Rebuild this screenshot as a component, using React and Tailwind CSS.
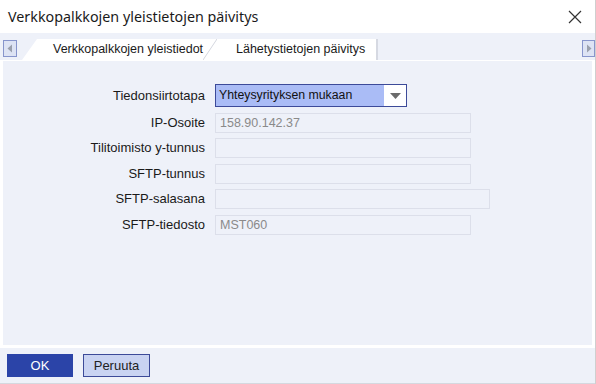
import React from "react";

const font = { fontFamily: '"Liberation Sans", Arial, sans-serif' };

function Field({ label, value, wide }) {
  return (
    <>
      <div className="text-right text-[13px] text-[#1a1a1a] leading-[20px] h-[20px]">{label}</div>
      <div
        className={`h-[20px] border border-[#dcdfea] bg-[#eef1f9] text-[12.5px] text-[#8a8a8a] leading-[18px] pl-[4px] ${
          wide ? "w-[275px]" : "w-[256px]"
        }`}
      >
        {value}
      </div>
    </>
  );
}

export default function App() {
  return (
    <div className="w-[596px] h-[384px] bg-white flex flex-col overflow-hidden border-r border-[#cfcfcf]" style={font}>
      {/* Title bar */}
      <div className="h-[33px] flex items-center justify-between pl-[8px] pr-[12px] shrink-0">
        <span className="text-[14.3px] text-[#1a1a1a]" style={{ fontFamily: '"Noto Sans", "Liberation Sans", sans-serif' }}>
          Verkkopalkkojen yleistietojen päivitys
        </span>
        <svg width="14" height="14" viewBox="0 0 14 14" className="mr-[1px]">
          <path d="M1 1 L13 13 M13 1 L1 13" stroke="#333" strokeWidth="1.2" fill="none" />
        </svg>
      </div>

      {/* Tab strip */}
      <div className="h-[27px] bg-[#eef1f9] flex items-end shrink-0 relative">
        <div className="ml-[3px] mb-[3px] w-[14px] h-[17px] border border-[#8795cc] bg-[#dde3f4] flex items-center justify-center">
          <svg width="6" height="9" viewBox="0 0 6 9"><path d="M5 0.5 L0.5 4.5 L5 8.5 Z" fill="#9aa0ad" /></svg>
        </div>
        <div className="ml-[5px] flex items-end h-[21px]">
          <svg width="15" height="21" viewBox="0 0 15 21" className="block">
            <path d="M0 21 L15 0 L15 21 Z" fill="#ffffff" />
          </svg>
          <div className="h-[21px] bg-white w-[180px] flex items-center pl-[16px] text-[12.5px] text-[#1a1a1a]">
            Verkkopalkkojen yleistiedot
          </div>
          <svg width="14" height="21" viewBox="0 0 14 21" className="block -ml-[14px]">
            <path d="M0 21 L14 0 L14 21 Z" fill="#ffffff" />
            <path d="M0 21 L14 0" stroke="#d4d7df" strokeWidth="1" />
          </svg>
          <div className="h-[21px] bg-white w-[161px] flex items-center pl-[19px] text-[12.5px] text-[#1a1a1a] border-r-2 border-[#d6d9e2]">
            Lähetystietojen päivitys
          </div>
        </div>
        <div className="flex-1" />
        <div className="mb-[3px] w-[13px] h-[17px] border border-[#8795cc] bg-[#dde3f4] flex items-center justify-center">
          <svg width="6" height="9" viewBox="0 0 6 9"><path d="M1 0.5 L5.5 4.5 L1 8.5 Z" fill="#9aa0ad" /></svg>
        </div>
      </div>

      {/* Content panel */}
      <div className="flex-1 bg-white px-[3px] pt-[1px] pb-[3px] flex flex-col">
        <div className="flex-1 bg-[#eef1f9] pt-[23px]">
          <div className="grid grid-cols-[202px_auto] gap-x-[10px] gap-y-[5.5px] items-center">
            <div className="text-right text-[13px] text-[#1a1a1a] leading-[20px]">Tiedonsiirtotapa</div>
            <div className="w-[192px] h-[23px] border border-[#3c4a99] bg-[#aabcf6] flex items-stretch">
              <div className="flex-1 text-[12.3px] text-[#111] leading-[21px] pl-[3px]">Yhteysyrityksen mukaan</div>
              <div className="w-[22px] bg-white flex items-center justify-center">
                <svg width="11" height="6" viewBox="0 0 11 6"><path d="M0 0 L11 0 L5.5 6 Z" fill="#6b6b6b" /></svg>
              </div>
            </div>
            <Field label="IP-Osoite" value="158.90.142.37" />
            <Field label="Tilitoimisto y-tunnus" value="" />
            <Field label="SFTP-tunnus" value="" />
            <Field label="SFTP-salasana" value="" wide />
            <Field label="SFTP-tiedosto" value="MST060" />
          </div>
        </div>
      </div>

      {/* Footer */}
      <div className="h-[36px] bg-[#eef1f9] flex items-center gap-[10px] pl-[7px] shrink-0 border-b border-[#d5d8df]">
        <button className="w-[66px] h-[23px] bg-[#2b44a8] text-white text-[13px] leading-[23px]">OK</button>
        <button className="w-[67px] h-[23px] bg-[#c9d3f2] border border-[#3c4a99] text-[#222] text-[13px]">Peruuta</button>
      </div>
    </div>
  );
}
